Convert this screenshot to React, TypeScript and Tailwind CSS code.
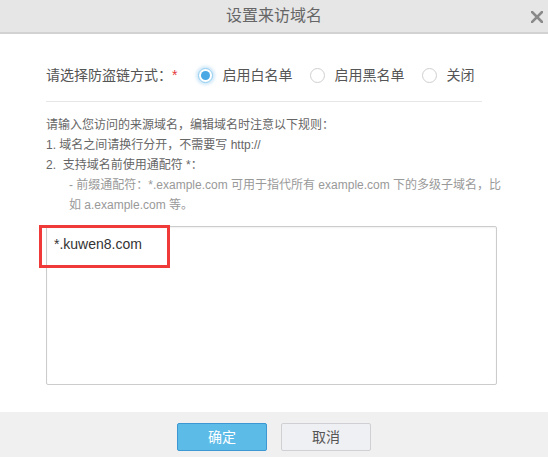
import React from 'react';

const font = { fontFamily: '"Liberation Sans", "Noto Sans CJK SC", sans-serif' };

interface RadioProps {
  label: string;
  checked?: boolean;
}

const Radio: React.FC<RadioProps> = ({ label, checked = false }) => (
  <label className="flex items-center cursor-pointer">
    {checked ? (
      <span className="flex h-[15px] w-[15px] items-center justify-center rounded-full border border-[#8fcdf0] bg-white shadow-[0_0_3px_2px_rgba(120,190,235,0.35)]">
        <span className="h-[9px] w-[9px] rounded-full bg-[#4aa9e4]" />
      </span>
    ) : (
      <span className="h-[15px] w-[15px] rounded-full border border-[#cfcfcf] bg-white" />
    )}
    <span className="ml-[9px] text-[14px] text-[#555]">{label}</span>
  </label>
);

export default function App() {
  return (
    <div className="relative h-[457px] w-[548px] overflow-hidden bg-white" style={font}>
      {/* Header */}
      <div className="relative flex h-[34px] items-center justify-center border-b-2 border-[#d2d2d2] bg-[#e6e6e6]">
        <span className="text-[16px] text-[#666]">设置来访域名</span>
        <button className="absolute right-[5px] top-[10px] flex h-[13px] w-[13px] items-center justify-center">
          <svg width="12" height="12" viewBox="0 0 12 12">
            <path d="M1 1 L11 11 M11 1 L1 11" stroke="#8a8a8a" strokeWidth="2.6" strokeLinecap="square" />
          </svg>
        </button>
      </div>

      {/* Body */}
      <div className="pl-[46px]">
        <div className="mt-[31px] flex h-[20px] w-[436px] items-center">
          <span className="text-[14px] text-[#555]">请选择防盗链方式：</span>
          <span className="text-[14px] text-[#e4393c]">*</span>
          <span className="ml-[21px] flex items-center gap-[18px]">
            <Radio label="启用白名单" checked />
            <Radio label="启用黑名单" />
            <Radio label="关闭" />
          </span>
        </div>

        <div className="mt-[16px] h-px w-[436px] bg-[#e6e6e6]" />

        <div className="mt-[13px] w-[436px] text-[12px] leading-[20px] text-[#666]">
          <p className="whitespace-nowrap">请输入您访问的来源域名，编辑域名时注意以下规则：</p>
          <p className="whitespace-nowrap">1. 域名之间请换行分开，不需要写 http://</p>
          <p className="whitespace-nowrap">2.&nbsp; 支持域名前使用通配符 *：</p>
          <div className="pl-[23px] text-[#999]">
            <p className="whitespace-nowrap">- 前缀通配符：*.example.com 可用于指代所有 example.com 下的多级子域名，比</p>
            <p className="whitespace-nowrap">如 a.example.com 等。</p>
          </div>
        </div>

        <textarea
          className="mt-[11px] block h-[159px] w-[451px] resize-none rounded-[2px] border border-[#cccccc] px-[7px] pt-[7px] text-[14px] leading-[20px] text-[#333] shadow-[inset_0_1px_2px_rgba(0,0,0,0.06)] outline-none"
          style={font}
          defaultValue="*.kuwen8.com"
        />
      </div>

      {/* Highlight box over the entered domain */}
      <div className="pointer-events-none absolute left-[39px] top-[225px] h-[43px] w-[131px] border-[3px] border-[#f03a3a]" />

      {/* Footer */}
      <div className="absolute bottom-0 left-0 right-0 flex h-[45px] justify-center gap-[14px] bg-[#f0f0f0] pt-[11px]">
        <button className="h-[28px] w-[90px] rounded-[2px] border border-[#3d97d1] bg-[#5dbbe8] text-[14px] text-white">
          确定
        </button>
        <button className="h-[28px] w-[90px] rounded-[2px] border border-[#cfcfd4] bg-[#eff0f3] text-[14px] text-[#555]">
          取消
        </button>
      </div>
    </div>
  );
}
